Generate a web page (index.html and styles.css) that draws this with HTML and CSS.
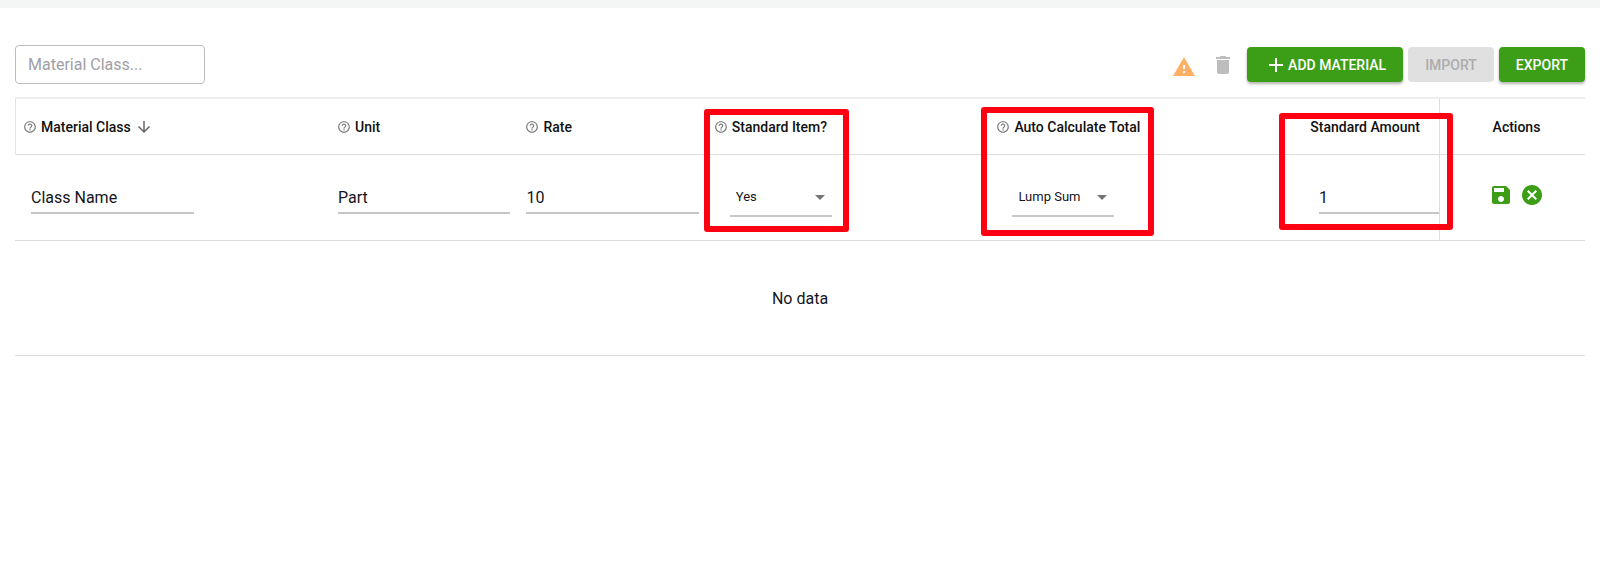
FILE: index.html
```html
<!DOCTYPE html>
<html lang="en">
<head>
    <meta charset="UTF-8">
    <meta name="viewport" content="width=device-width, initial-scale=1.0">
    <title>Materials</title>
    <link rel="stylesheet" href="styles.css">
</head>
<body>

    <svg class="sprite" aria-hidden="true">
        <symbol id="help" viewBox="0 0 24 24">
            <path d="M11 18h2v-2h-2v2zm1-16C6.48 2 2 6.48 2 12s4.480 10 10 10 10-4.480 10-10S17.520 2 12 2zm0 18c-4.410 0-8-3.590-8-8s3.590-8 8-8 8 3.590 8 8-3.590 8-8 8zm0-14c-2.210 0-4 1.790-4 4h2c0-1.100.9-2 2-2s2 .9 2 2c0 2-3 1.750-3 5h2c0-2.250 3-2.500 3-5 0-2.210-1.790-4-4-4z"/>
        </symbol>
        <symbol id="caret" viewBox="0 0 24 24">
            <path d="M7 10l5 5 5-5z"/>
        </symbol>
    </svg>

    <header class="topbar"></header>

    <main class="content">
        <div class="toolbar">
            <input type="text" class="search" placeholder="Material Class..." aria-label="Material Class">
            <div class="tools">
                <span class="warning">
                    <svg class="icon" viewBox="0 0 24 24"><path d="M1 21h22L12 2 1 21zm12-3h-2v-2h2v2zm0-4h-2v-4h2v4z"/></svg>
                </span>
                <button class="icon-button delete" aria-label="Delete" disabled>
                    <svg class="icon" viewBox="0 0 24 24"><path d="M6 19c0 1.100.9 2 2 2h8c1.100 0 2-.9 2-2V7H6v12zM19 4h-3.500l-1-1h-5l-1 1H5v2h14V4z"/></svg>
                </button>
                <div class="buttons">
                    <button class="button">
                        <svg class="icon" viewBox="0 0 24 24"><path d="M19 13h-6v6h-2v-6H5v-2h6V5h2v6h6v2z"/></svg>
                        ADD MATERIAL
                    </button>
                    <button class="button" disabled>IMPORT</button>
                    <button class="button">EXPORT</button>
                </div>
            </div>
        </div>

        <table class="materials">
            <thead>
                <tr>
                    <th class="col-class">
                        <div class="heading">
                            <svg class="help"><use href="#help"/></svg>
                            Material Class
                            <svg class="sort" viewBox="0 0 24 24"><path d="M20 12l-1.410-1.410L13 16.170V4h-2v12.170l-5.580-5.590L4 12l8 8 8-8z"/></svg>
                        </div>
                    </th>
                    <th class="col-small">
                        <div class="heading"><svg class="help"><use href="#help"/></svg>Unit</div>
                    </th>
                    <th class="col-small">
                        <div class="heading"><svg class="help"><use href="#help"/></svg>Rate</div>
                    </th>
                    <th class="col-select">
                        <div class="heading"><svg class="help"><use href="#help"/></svg>Standard Item?</div>
                        <div class="highlight highlight-item"></div>
                    </th>
                    <th class="col-select">
                        <div class="heading"><svg class="help"><use href="#help"/></svg>Auto Calculate Total</div>
                        <div class="highlight highlight-total"></div>
                    </th>
                    <th class="col-amount">
                        Standard Amount
                        <div class="highlight highlight-amount"></div>
                    </th>
                    <th class="col-actions">Actions</th>
                </tr>
            </thead>
            <tbody>
                <tr class="edit-row">
                    <td class="cell-class"><input type="text" class="field" value="Class Name" aria-label="Material Class"></td>
                    <td class="cell-field"><input type="text" class="field" value="Part" aria-label="Unit"></td>
                    <td class="cell-field"><input type="text" class="field" value="10" aria-label="Rate"></td>
                    <td class="cell-select">
                        <div class="select">
                            <select aria-label="Standard Item?">
                                <option>Yes</option>
                                <option>No</option>
                            </select>
                            <svg class="caret"><use href="#caret"/></svg>
                        </div>
                    </td>
                    <td class="cell-select">
                        <div class="select">
                            <select aria-label="Auto Calculate Total">
                                <option>Lump Sum</option>
                            </select>
                            <svg class="caret"><use href="#caret"/></svg>
                        </div>
                    </td>
                    <td class="cell-amount"><input type="text" class="field" value="1" aria-label="Standard Amount"></td>
                    <td class="col-actions">
                        <div class="actions">
                            <button class="icon-button" aria-label="Save">
                                <svg class="icon" viewBox="0 0 24 24"><path d="M17 3H5c-1.110 0-2 .9-2 2v14c0 1.100.89 2 2 2h14c1.100 0 2-.9 2-2V7l-4-4zm-5 16c-1.660 0-3-1.340-3-3s1.340-3 3-3 3 1.340 3 3-1.340 3-3 3zm3-10H5V5h10v4z"/></svg>
                            </button>
                            <button class="icon-button" aria-label="Cancel">
                                <svg class="icon" viewBox="0 0 24 24"><path d="M12 2C6.470 2 2 6.470 2 12s4.470 10 10 10 10-4.470 10-10S17.530 2 12 2zm5 13.590L15.590 17 12 13.410 8.410 17 7 15.590 10.590 12 7 8.410 8.410 7 12 10.590 15.590 7 17 8.410 13.410 12 17 15.590z"/></svg>
                            </button>
                        </div>
                    </td>
                </tr>
                <tr class="empty-row">
                    <td colspan="7">No data</td>
                </tr>
            </tbody>
        </table>
    </main>

</body>
</html>
```
FILE: styles.css
```css
* {
    box-sizing: border-box;
}
body {
    margin: 0;
    font-family: Roboto, sans-serif;
    font-size: 16px;
    color: #151522;
    background-color: #fff;
}
input, select, button {
    font-family: inherit;
    color: inherit;
}
svg {
    display: block;
    flex-shrink: 0;
    fill: currentColor;
}
.sprite {
    position: absolute;
    width: 0;
    height: 0;
}
.topbar {
    height: 8px;
    background-color: #f4f5f5;
}
.content {
    padding: 37px 15px 0;
}
.toolbar {
    display: flex;
    justify-content: space-between;
    align-items: center;
    margin-bottom: 13px;
}
.search {
    width: 190px;
    height: 39px;
    padding: 0 12px;
    font-size: 16px;
    border: 1px solid #bdbdbd;
    border-radius: 4px;
}
.search::placeholder {
    color: #a0a0a5;
    opacity: 1;
}
.tools {
    display: flex;
    align-items: center;
    gap: 12px;
}
.icon {
    width: 24px;
    height: 24px;
}
.warning {
    display: flex;
    align-items: flex-end;
    height: 28px;
    padding-right: 3px;
    color: #ffb066;
}
.icon-button {
    padding: 0;
    border: none;
    background: none;
    color: #3c9e17;
    cursor: pointer;
}
.delete {
    color: #bdbdbd;
}
.buttons {
    display: flex;
    gap: 5px;
}
.button {
    display: flex;
    align-items: center;
    height: 35px;
    padding: 0 17px;
    font-size: 14px;
    font-weight: 500;
    color: #fff;
    background-color: #3c9e17;
    border: none;
    border-radius: 4px;
    box-shadow: 0 2px 3px rgba(0, 0, 0, 0.3);
    cursor: pointer;
}
.button:disabled {
    color: #acacac;
    background-color: #e0e0e0;
    box-shadow: none;
}
.materials {
    width: 100%;
    table-layout: fixed;
    border-collapse: separate;
    border-spacing: 0;
    border-top: 2px solid #eee;
}
th {
    position: relative;
    height: 56px;
    padding: 0 8px;
    font-size: 14px;
    font-weight: 500;
    text-align: left;
    color: #111;
    border-bottom: 1px solid #ddd;
}
td {
    padding: 0;
    border-bottom: 1px solid #ddd;
}
.col-class {
    width: 20%;
    padding-left: 7px;
    border-left: 1px solid #e4e4e4;
}
.col-small {
    width: 12%;
}
.col-select {
    width: 18%;
}
.col-amount {
    padding-right: 19px;
    text-align: right;
}
th.col-actions {
    width: 146px;
}
.col-actions {
    padding: 0 0 0 8px;
    text-align: center;
    border-left: 1px solid #ddd;
}
.heading {
    display: flex;
    align-items: center;
    gap: 4px;
}
.help {
    width: 14px;
    height: 14px;
    color: #777;
}
.sort {
    width: 18px;
    height: 18px;
    color: #666;
}
.edit-row td {
    height: 86px;
}
.field {
    display: block;
    width: 100%;
    height: 32px;
    padding: 2px 0 0;
    font-size: 16px;
    background: none;
    border: none;
    border-bottom: 2px solid #c6c6c6;
}
.cell-class {
    padding-left: 16px;
}
.cell-class .field {
    width: 163px;
}
.cell-field {
    padding: 0 7px 0 9px;
}
.cell-amount {
    padding-left: 48px;
}
.cell-select {
    padding-left: 24px;
}
.select {
    display: grid;
    align-items: center;
    width: 102px;
    height: 38px;
    border-bottom: 2px solid #c6c6c6;
}
.select select,
.select .caret {
    grid-area: 1 / 1;
}
.select select {
    width: 100%;
    height: 100%;
    padding: 0 24px 0 6px;
    font-size: 13px;
    appearance: none;
    background: none;
    border: none;
}
.caret {
    justify-self: end;
    width: 24px;
    height: 24px;
    color: #757575;
    pointer-events: none;
}
.actions {
    display: flex;
    justify-content: center;
    gap: 7px;
    padding-bottom: 6px;
}
.empty-row td {
    height: 115px;
    text-align: center;
}
.highlight {
    position: absolute;
    z-index: 1;
    border: 6px solid #ff0012;
    border-radius: 3px;
    pointer-events: none;
}
.highlight-item {
    top: 10px;
    left: -2px;
    width: 145px;
    height: 123px;
}
.highlight-total {
    top: 8px;
    left: -7px;
    width: 173px;
    height: 129px;
}
.highlight-amount {
    top: 14px;
    right: -14px;
    width: 174px;
    height: 117px;
}
```
